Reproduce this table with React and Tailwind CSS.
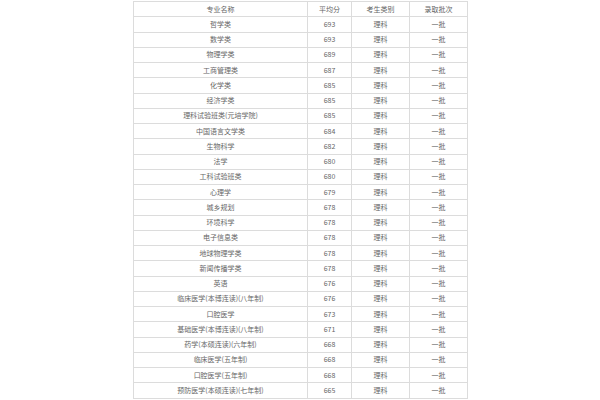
import React from "react";

const rows = [
  ["哲学类", "693"],
  ["数学类", "693"],
  ["物理学类", "689"],
  ["工商管理类", "687"],
  ["化学类", "685"],
  ["经济学类", "685"],
  ["理科试验班类(元培学院)", "685"],
  ["中国语言文学类", "684"],
  ["生物科学", "682"],
  ["法学", "680"],
  ["工科试验班类", "680"],
  ["心理学", "679"],
  ["城乡规划", "678"],
  ["环境科学", "678"],
  ["电子信息类", "678"],
  ["地球物理学类", "678"],
  ["新闻传播学类", "678"],
  ["英语", "676"],
  ["临床医学(本博连读)(八年制)", "676"],
  ["口腔医学", "673"],
  ["基础医学(本博连读)(八年制)", "671"],
  ["药学(本硕连读)(六年制)", "668"],
  ["临床医学(五年制)", "668"],
  ["口腔医学(五年制)", "668"],
  ["预防医学(本硕连读)(七年制)", "665"],
];

const cell = "border border-[#dcdcdc] text-center align-middle p-0 leading-none";

export default function App() {
  return (
    <div className="w-[600px] h-[400px] bg-white pt-px pl-[133px] font-['Noto_Sans_CJK_SC','Noto_Sans',sans-serif] text-[7px] text-[#666]">
      <table className="table-fixed border-collapse w-[334px]">
        <colgroup>
          <col className="w-[174px]" />
          <col className="w-[44px]" />
          <col className="w-[58px]" />
          <col className="w-[58px]" />
        </colgroup>
        <thead>
          <tr className="h-[15.25px]">
            <th className={`${cell} font-normal`}>专业名称</th>
            <th className={`${cell} font-normal`}>平均分</th>
            <th className={`${cell} font-normal`}>考生类别</th>
            <th className={`${cell} font-normal`}>录取批次</th>
          </tr>
        </thead>
        <tbody>
          {rows.map(([name, score]) => (
            <tr key={name} className="h-[15.25px]">
              <td className={cell}>{name}</td>
              <td className={cell}>{score}</td>
              <td className={cell}>理科</td>
              <td className={cell}>一批</td>
            </tr>
          ))}
        </tbody>
      </table>
    </div>
  );
}
